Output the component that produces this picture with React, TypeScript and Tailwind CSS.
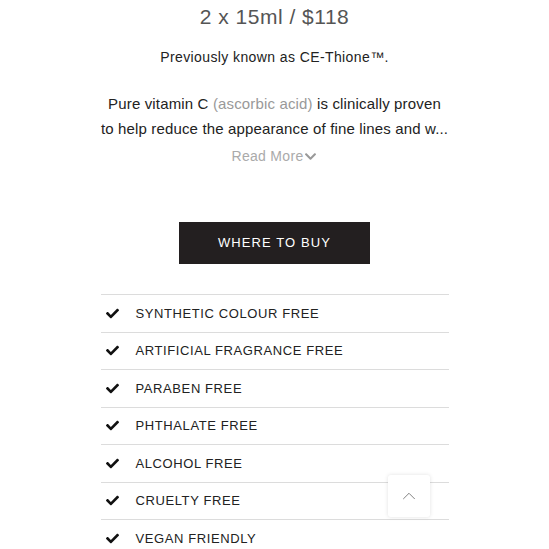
import { FaCheck, FaChevronDown } from 'react-icons/fa';
import { ChevronUp } from 'lucide-react';

const claims = [
  'SYNTHETIC COLOUR FREE',
  'ARTIFICIAL FRAGRANCE FREE',
  'PARABEN FREE',
  'PHTHALATE FREE',
  'ALCOHOL FREE',
  'CRUELTY FREE',
  'VEGAN FRIENDLY',
];

export default function App() {
  return (
    <div className="relative w-[549px] h-[549px] overflow-hidden bg-white font-['Liberation_Sans',sans-serif] text-[#222]">
      <div className="flex flex-col items-center">
        {/* Price */}
        <div className="h-[34px] leading-[34px] text-[21px] text-[#555] tracking-[0.5px]">2 x 15ml / $118</div>

        {/* Previous name */}
        <div className="mt-[11px] h-[24px] leading-[24px] text-[14px] tracking-[0.4px]">Previously known as CE-Thione™.</div>

        {/* Description */}
        <div className="mt-[22px] w-[380px] text-center text-[15px] leading-[25px] tracking-[0.15px]">
          <div>
            Pure vitamin C <span className="text-[#999]">(ascorbic acid)</span> is clinically proven
          </div>
          <div>to help reduce the appearance of fine lines and w...</div>
        </div>

        {/* Read more */}
        <div className="mt-[5px] h-[20px] flex items-center text-[14px] text-[#aaa] tracking-[0.3px]">
          Read More
          <FaChevronDown className="ml-[1px] w-[13px] h-[13px] text-[#999]" />
        </div>

        {/* CTA */}
        <button className="mt-[56px] w-[191px] h-[42px] bg-[#231f20] text-white text-[13px] tracking-[1.1px]">
          WHERE TO BUY
        </button>

        {/* Claims */}
        <ul className="mt-[30px] w-[348px]">
          {claims.map((c) => (
            <li key={c} className="h-[37.5px] border-t border-[#dcdcdc] flex items-center">
              <FaCheck className="ml-[5px] w-[13px] h-[13px] text-[#111]" />
              <span className="ml-[17px] text-[13px] tracking-[0.6px] text-[#222]">{c}</span>
            </li>
          ))}
        </ul>
      </div>

      {/* Back to top */}
      <button className="absolute left-[388px] top-[475px] w-[42px] h-[42px] bg-white rounded-[3px] shadow-[0_0_4px_rgba(0,0,0,0.12)] flex items-center justify-center">
        <ChevronUp className="w-[22px] h-[22px] text-[#777]" strokeWidth={1} />
      </button>
    </div>
  );
}
